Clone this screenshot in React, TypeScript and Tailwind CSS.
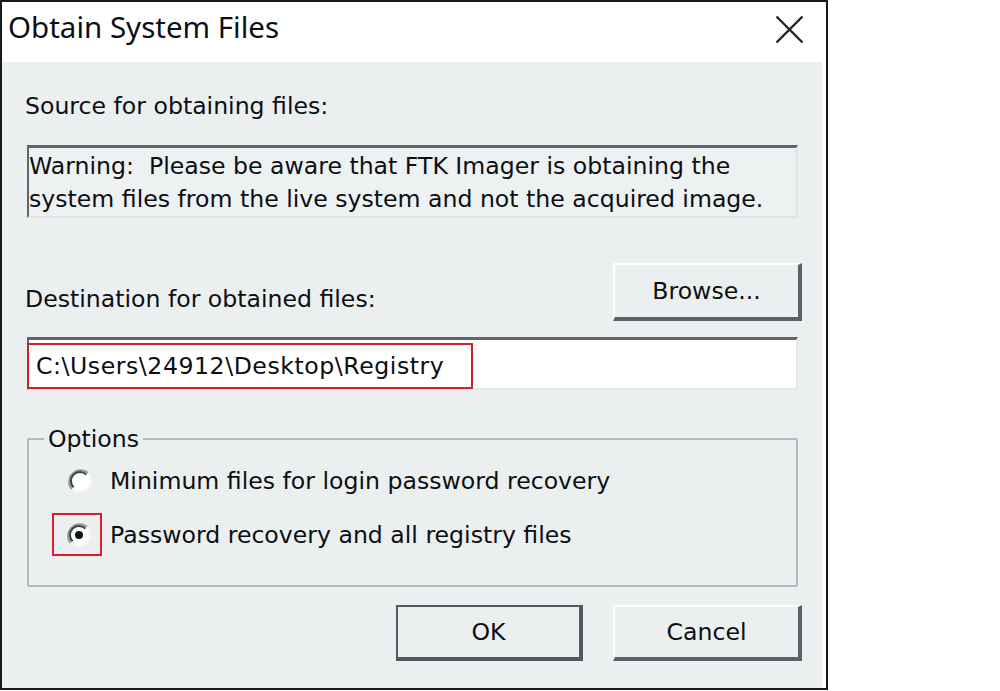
import React from "react";

function Radio({ checked }: { checked?: boolean }) {
  return (
    <svg width="26" height="26" viewBox="0 0 26 26">
      <circle cx="13" cy="13" r="11.5" fill="#ffffff" />
      <path d="M4.9 21.1 A11.5 11.5 0 0 1 21.1 4.9" fill="none" stroke="#8c9599" strokeWidth="2" />
      <path d="M6.6 19.4 A9 9 0 0 1 19.4 6.6" fill="none" stroke="#3a3f42" strokeWidth="2" />
      <path d="M21.1 4.9 A11.5 11.5 0 0 1 4.9 21.1" fill="none" stroke="#f4f6f7" strokeWidth="2" />
      {checked && <circle cx="13" cy="13" r="4" fill="#111" />}
    </svg>
  );
}

export default function App() {
  return (
    <div
      className="w-[1000px] h-[691px] bg-white text-[#0c0f12]"
      style={{ fontFamily: '"DejaVu Sans", sans-serif' }}
    >
      <div className="w-[828px] h-[690px] border-2 border-[#1a1a1a] bg-white flex flex-col">
        {/* title bar */}
        <div className="h-[60px] shrink-0 flex items-start justify-between">
          <div
            className="pl-[6px] pt-[5px] text-[29.5px] leading-[40px]"
            style={{ fontFamily: '"Noto Sans", sans-serif' }}
          >
            Obtain System Files
          </div>
          <div className="pt-[13px] pr-[22px]">
            <svg width="29" height="29" viewBox="0 0 29 29">
              <path d="M1.5 1.5 L27.5 27.5 M27.5 1.5 L1.5 27.5" stroke="#1f2326" strokeWidth="2.4" />
            </svg>
          </div>
        </div>
        {/* content */}
        <div className="flex-1 mr-[4px] bg-[#eceff0] flex flex-col pl-[25px] pr-[24px] text-[23.6px] leading-[32px]">
          <div className="mt-[28px] h-[31px] -ml-[2px]">Source for obtaining files:</div>

          <div className="mt-[24px] h-[73px] border-t-[3px] border-l-[2px] border-b-[2px] border-r-[2px] border-t-[#5d676b] border-l-[#5d676b] border-b-[#dfe3e5] border-r-[#dfe3e5] bg-[#eef1f2] pt-[2px] leading-[33px]">
            <div>Warning:&nbsp; Please be aware that FTK Imager is obtaining the</div>
            <div>system files from the live system and not the acquired image.</div>
          </div>

          <div className="mt-[45px] h-[58px] -mr-[4px] flex items-start justify-between">
            <div className="mt-[20px] -ml-[2px]">Destination for obtained files:</div>
            <button className="w-[189px] h-[58px] border-t-2 border-l-2 border-b-[4px] border-r-[4px] border-t-white border-l-white border-b-[#56636a] border-r-[#56636a] bg-[#eceff0] flex items-center justify-center">
              Browse...
            </button>
          </div>

          <div className="mt-[16px] h-[53px] border-t-[3px] border-l-[2px] border-b-[2px] border-r-[2px] border-t-[#5d676b] border-l-[#5d676b] border-b-[#e3e7e9] border-r-[#e3e7e9] bg-white">
            <div className="-ml-[2px] mt-[3px] w-[446px] h-[46px] border-2 border-[#d61f2c] flex items-center pl-[7px] tracking-[0.55px]">
              C:\Users\24912\Desktop\Registry
            </div>
          </div>

          <fieldset className="mt-[33px] h-[164px] border-2 border-[#b3babd] rounded-[2px] flex flex-col">
            <legend className="ml-[15px] px-[4px] leading-[32px]">Options</legend>
            <div className="mt-[4px] pl-[23px] h-[43px] flex items-center">
              <span className="w-[50px] h-[43px] pl-[6px] flex items-center justify-center">
                <Radio />
              </span>
              <span className="ml-[8px]">Minimum files for login password recovery</span>
            </div>
            <div className="mt-[11px] pl-[23px] h-[43px] flex items-center">
              <span className="w-[50px] h-[43px] pl-[4px] border-2 border-[#d61f2c] flex items-center justify-center">
                <Radio checked />
              </span>
              <span className="ml-[8px]">Password recovery and all registry files</span>
            </div>
          </fieldset>

          <div className="mt-[18px] -mr-[4px] flex justify-end gap-[30px]">
            <button className="w-[187px] h-[56px] border-t-2 border-l-2 border-b-[4px] border-r-[4px] border-[#4f5a5e] bg-[#eceff0] flex items-center justify-center">
              OK
            </button>
            <button className="w-[189px] h-[56px] border-t-2 border-l-2 border-b-[4px] border-r-[4px] border-t-white border-l-white border-b-[#56636a] border-r-[#56636a] bg-[#eceff0] flex items-center justify-center">
              Cancel
            </button>
          </div>
        </div>
      </div>
    </div>
  );
}
